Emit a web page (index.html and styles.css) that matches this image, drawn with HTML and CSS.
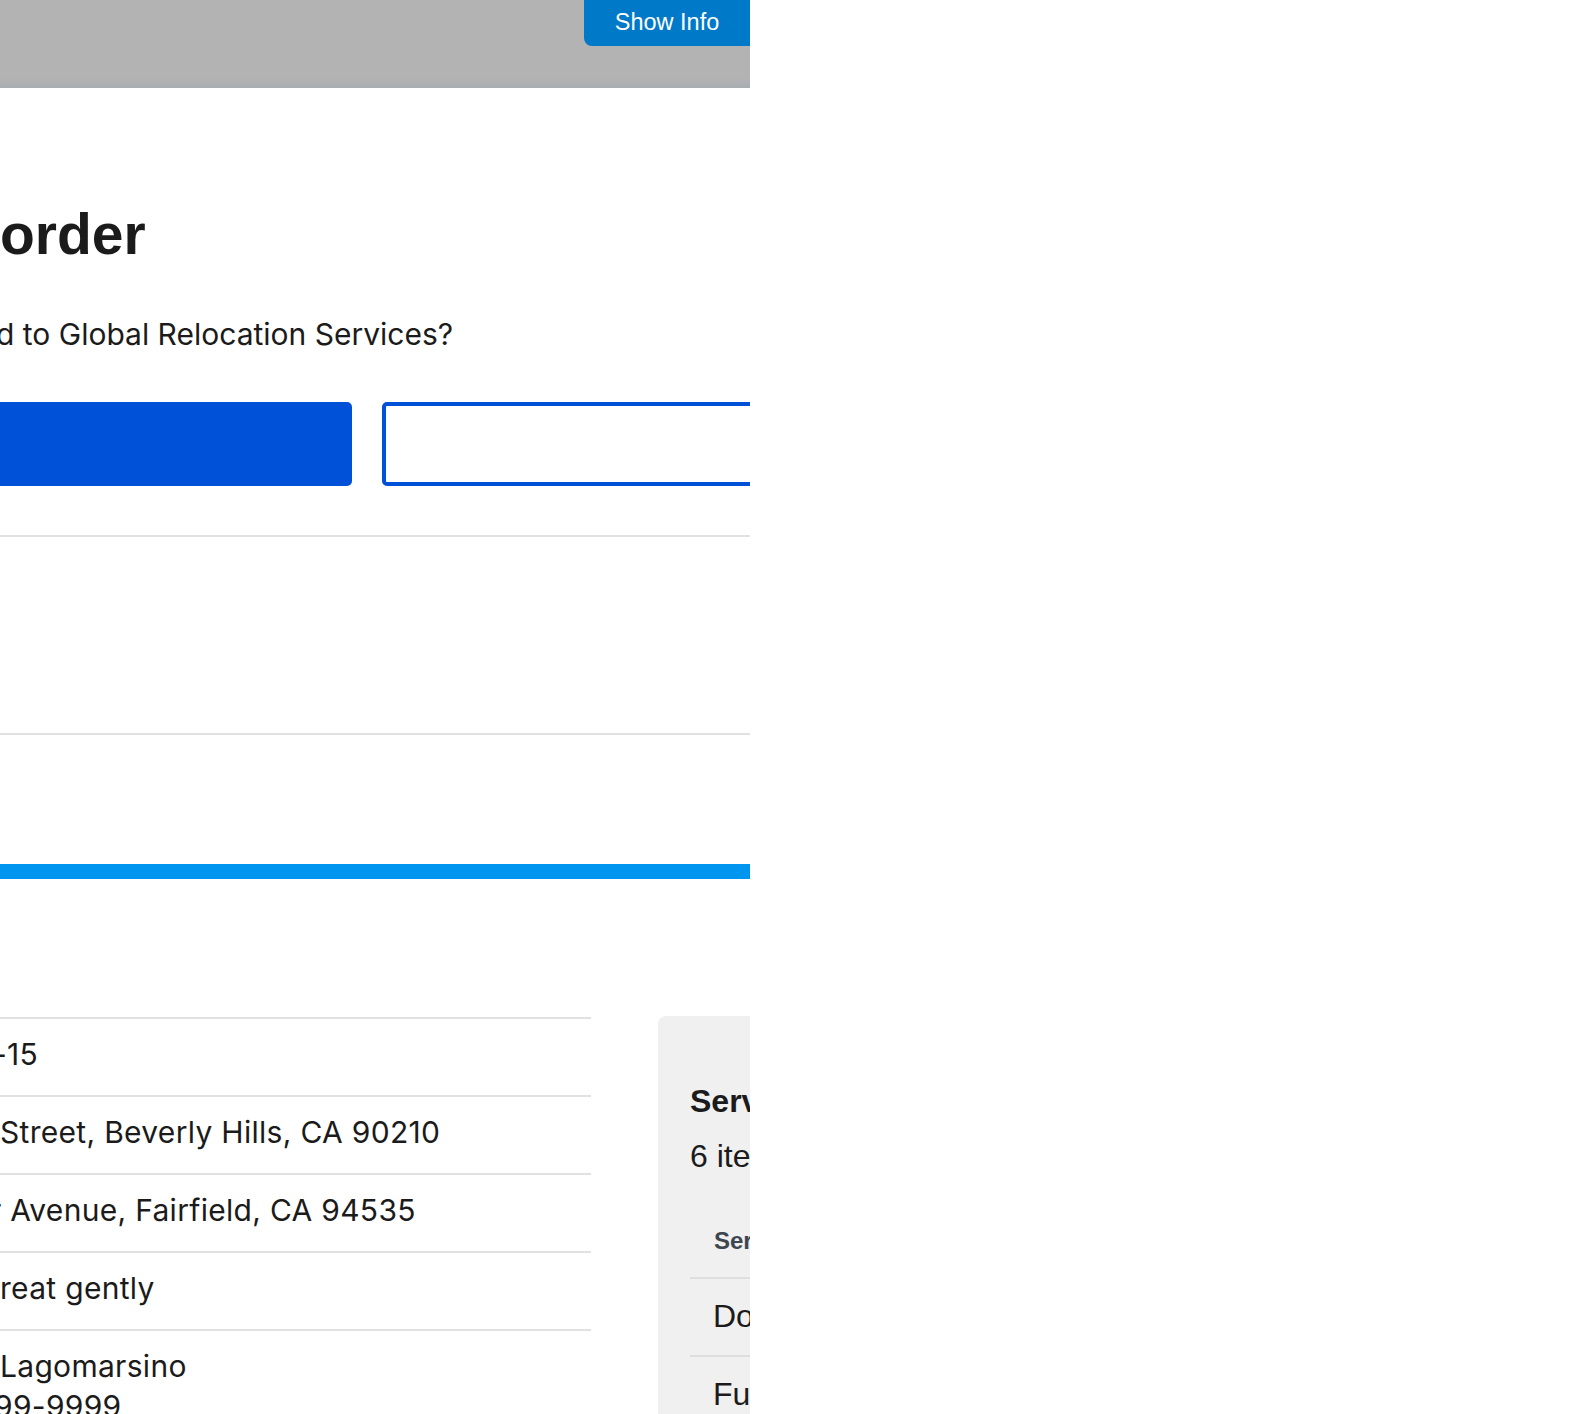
FILE: index.html
```html
<!DOCTYPE html>
<html lang="en">
<head>
<meta charset="utf-8">
<title>Move order</title>
<link rel="stylesheet" href="styles.css">
</head>
<body>
<div class="frame">
  <header class="topbar">
    <button class="show-info" type="button">Show Info</button>
  </header>

  <main class="content">
    <section class="confirm">
      <h1 class="title">order</h1>
      <p class="lead">d to Global Relocation Services?</p>
      <div class="actions">
        <button class="btn btn-primary" type="button" aria-label="Confirm"></button>
        <button class="btn btn-outline" type="button" aria-label="Cancel"></button>
      </div>
    </section>

    <hr class="rule rule-first">
    <hr class="rule rule-second">

    <div class="stripe"></div>

    <section class="details">
      <div class="facts">
        <div class="fact"><span class="cut-hyphen">-15</span></div>
        <div class="fact"><span>Street, Beverly Hills, CA 90210</span></div>
        <div class="fact"><span class="cut-r">r Avenue, Fairfield, CA 94535</span></div>
        <div class="fact"><span>reat gently</span></div>
        <div class="fact"><span>Lagomarsino</span><br><span class="cut-nine">99-9999</span></div>
      </div>

      <aside class="card">
        <h2 class="card-title">Services</h2>
        <p class="card-count">6 items</p>
        <table class="svc-table">
          <thead>
            <tr><th>Service</th></tr>
          </thead>
          <tbody>
            <tr><td>Domestic shipment</td></tr>
            <tr><td>Full packing</td></tr>
          </tbody>
        </table>
      </aside>
    </section>
  </main>
</div>
</body>
</html>
```
FILE: styles.css
```css
html, body {
  margin: 0;
  padding: 0;
  background: #ffffff;
}

.frame {
  width: 750px;
  height: 1414px;
  overflow: hidden;
  color: #1b1b1b;
}

/* top bar */
.topbar {
  height: 88px;
  display: flex;
  justify-content: flex-end;
  align-items: flex-start;
  background: linear-gradient(to bottom, #b3b3b3 0, #b3b3b3 78px, #a9adb0 88px);
}

.show-info {
  flex: none;
  width: 166px;
  height: 46px;
  padding: 0 0 1px 0;
  border: 0;
  border-bottom-left-radius: 8px;
  background: #0179c9;
  color: #ffffff;
  font-family: "Liberation Sans", Arial, sans-serif;
  font-size: 23.5px;
  line-height: 45px;
  text-align: center;
}

/* confirm section */
.title {
  margin: 114px 0 0 0;
  font-family: "Liberation Sans", Arial, sans-serif;
  font-weight: bold;
  font-size: 57px;
  line-height: 65px;
}

.lead {
  margin: 49px 0 0 -4px;
  font-family: Inter, "Noto Sans", sans-serif;
  font-size: 30px;
  line-height: 36px;
  white-space: nowrap;
}

.actions {
  display: flex;
  gap: 30px;
  margin-top: 50px;
}

.btn {
  flex: none;
  height: 84px;
  box-sizing: border-box;
  border-radius: 5px;
  padding: 0;
}

.btn-primary {
  width: 400px;
  margin-left: -48px;
  border: 0;
  background: #0050d8;
}

.btn-outline {
  width: 600px;
  border: 4px solid #0050d8;
  background: #ffffff;
}

.rule {
  border: 0;
  height: 2px;
  background: #dfe1e2;
  margin: 0;
}

.rule-first {
  margin-top: 49px;
}

.rule-second {
  margin-top: 196px;
}

.stripe {
  height: 15px;
  margin-top: 129px;
  background: #0096f0;
}

/* details */
.details {
  display: flex;
  align-items: flex-start;
  margin-top: 138px;
}

.facts {
  flex: none;
  width: 591px;
  font-family: Inter, "Noto Sans", sans-serif;
  font-size: 30px;
  line-height: 40px;
  letter-spacing: 0.3px;
}

.fact {
  border-top: 2px solid #dfe1e2;
  padding: 15px 0 21px 0;
  white-space: nowrap;
}

.cut-hyphen {
  margin-left: -7px;
}

.cut-r {
  margin-left: -10px;
}

.cut-nine {
  margin-left: -6px;
}

.card {
  flex: none;
  width: 600px;
  margin-left: 67px;
  margin-top: -1px;
  padding: 67px 32px 40px 32px;
  background: #f0f0f0;
  border-radius: 8px;
  font-family: "Liberation Sans", Arial, sans-serif;
}

.card-title {
  margin: 0;
  font-size: 32px;
  line-height: 37px;
  font-weight: bold;
  white-space: nowrap;
}

.card-count {
  margin: 18px 0 0 0;
  font-size: 32px;
  line-height: 37px;
  white-space: nowrap;
}

.svc-table {
  margin-top: 32px;
  width: 100%;
  border-collapse: collapse;
}

.svc-table th {
  text-align: left;
  padding: 20px 23px 22px 24px;
  font-size: 24px;
  line-height: 28px;
  font-weight: bold;
  color: #3d4551;
  border-bottom: 2px solid #dcdee0;
  white-space: nowrap;
}

.svc-table td {
  padding: 19px 23px 20px 23px;
  font-size: 32px;
  line-height: 37px;
  border-bottom: 2px solid #dcdee0;
  white-space: nowrap;
}
```
